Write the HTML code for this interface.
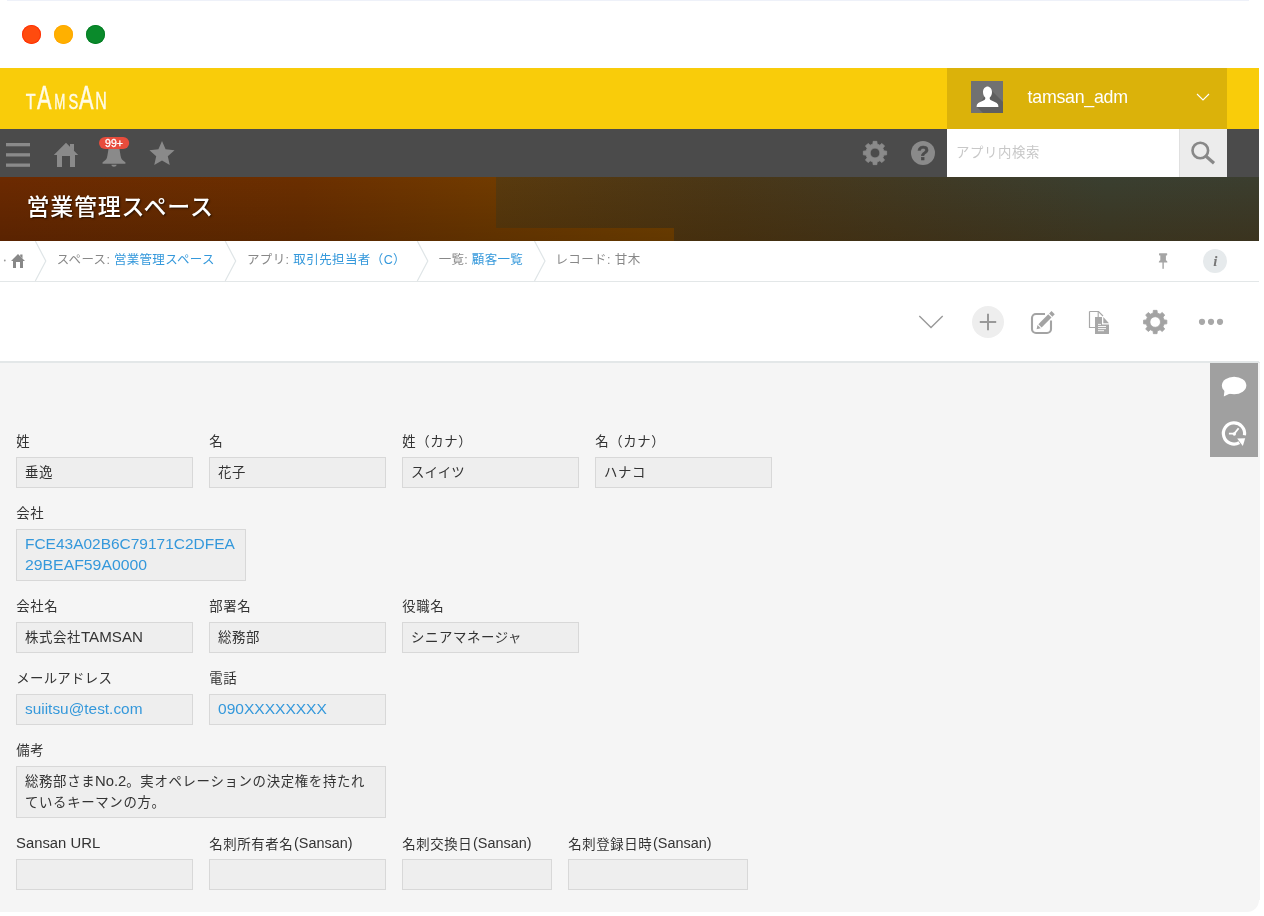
<!DOCTYPE html>
<html lang="ja">
<head>
<meta charset="utf-8">
<title>営業管理スペース</title>
<style>
*{box-sizing:border-box;margin:0;padding:0}
html,body{width:1264px;height:916px;overflow:hidden;background:#fff}
body{font-family:"Liberation Sans","Noto Sans CJK JP",sans-serif;color:#333;font-size:14px;position:relative}
.abs{position:absolute}
#topline{left:7px;top:0;width:1242px;height:1px;background:#eef1f9}
.dot{position:absolute;top:25px;width:19px;height:19px;border-radius:50%}
#hdr{left:0;top:68px;width:1259px;height:61px;background:#f9cc0a}
#user{left:947px;top:68px;width:280px;height:61px;background:#dbb20a}
#uname{left:1027.6px;top:85.5px;color:#fff;font-size:17.8px;letter-spacing:-0.27px;line-height:22px;white-space:nowrap}
#nav{left:0;top:129px;width:1259px;height:48px;background:#4b4b4b}
#search{left:947px;top:129px;width:232px;height:48px;background:#fff}
#search span{position:absolute;left:9px;top:14px;font-size:13.4px;letter-spacing:.6px;line-height:20px;color:#c8c8c8;white-space:nowrap}
#sbtn{left:1179px;top:129px;width:48px;height:48px;background:#ececec;border-left:1px solid #e0e0e0}
#banner{left:0;top:177px;width:1259px;height:64px;background:#5d2600;overflow:hidden}
#title{left:26.4px;top:189.3px;color:#fff;font-size:23px;letter-spacing:0.75px;font-weight:500;line-height:36px;white-space:nowrap;text-shadow:1px 1px 2px rgba(0,0,0,.65)}
#crumb{left:0;top:241px;width:1259px;height:41px;background:#fff;border-bottom:1px solid #e3e7e8}
.bc{position:absolute;top:250px;font-size:12.5px;letter-spacing:.5px;line-height:20px;color:#888;white-space:nowrap}
.bc a,.fd.lnk{color:#3498db;text-decoration:none}
#tool{left:0;top:282px;width:1259px;height:80px;background:#fff;border-bottom:1px solid #e3e7e8}
#main{left:0;top:362px;width:1259.5px;height:538px;background:#f5f5f5;border-top:1px solid #e3e7e8}
#main2{left:0;top:899.5px;width:1258.5px;height:12.5px;background:#f5f5f5;border-bottom-right-radius:12px}
#side{left:1210px;top:363px;width:48px;height:94px;background:#a0a0a0}
.lb{position:absolute;font-size:13.4px;letter-spacing:.6px;line-height:20px;color:#333;white-space:nowrap;padding-left:.3px;margin-top:.9px}
.sx{display:inline-block;transform-origin:0 50%;white-space:nowrap;font-size:14px;letter-spacing:0}
.fd>.sx:first-child{margin-left:-.4px}
.lb>.sx:first-child{margin-left:-.6px}
.lb>.sx{position:relative;top:-.7px}
.fd{position:absolute;height:31px;background:#eeeeee;border:1px solid #d8d8d8;font-size:13.4px;letter-spacing:.6px;line-height:21px;padding:4px 8px 4px 8px;color:#333;white-space:nowrap;overflow:hidden}
</style>
</head>
<body>
<div id="root" style="position:absolute;left:0;top:0;width:1264px;height:916px;will-change:transform;transform:translateZ(0)">
<div class="abs" id="topline"></div>
<div class="dot" style="left:22px;background:#ff4b0e;box-shadow:inset 0 0 0 1px #ff3207"></div>
<div class="dot" style="left:54px;background:#ffb000;box-shadow:inset 0 0 0 1px #ffa800"></div>
<div class="dot" style="left:86px;background:#0a8a2b;box-shadow:inset 0 0 0 1px #057f25"></div>

<div class="abs" id="hdr"></div>
<svg class="abs" style="left:22px;top:80px" width="92" height="34" viewBox="0 0 92 34">
<g fill="#fffbe6" stroke="#fffbe6" stroke-width="0.45" font-family="Liberation Sans, sans-serif" font-weight="400">
<text transform="translate(3.7,29.3) scale(0.72,1)" font-size="22.5">T</text>
<text transform="translate(14.9,29.3) scale(0.67,1)" font-size="32.5">A</text>
<text transform="translate(32.2,29.3) scale(0.62,1)" font-size="21.5">M</text>
<text transform="translate(46.6,29.3) scale(0.68,1)" font-size="21.5">S</text>
<text transform="translate(56.9,29.3) scale(0.67,1)" font-size="32.5">A</text>
<text transform="translate(73.3,29.3) scale(0.68,1)" font-size="23.5">N</text>
</g></svg>
<div class="abs" id="user"></div>
<svg class="abs" style="left:971px;top:81px" width="32" height="32" viewBox="0 0 32 32">
<rect width="32" height="32" fill="#717171"/>
<path d="M19 8L32 21V32H12L6 26Z" fill="#5f5f5f"/>
<path d="M16 5.5c3.1 0 5 2.4 5 5.6 0 2.3-.9 4.3-2.2 5.4-.3.8-.1 1.9.8 2.4 2.6 1.3 6.2 2.2 7.4 4.6.3.6.4 1.6.4 2.5H5.6c0-.9.1-1.900.4-2.500 1.200-2.400 4.800-3.300 7.400-4.600.9-.5 1.100-1.600.8-2.400-1.300-1.100-2.200-3.100-2.200-5.400 0-3.200 1.900-5.600 5-5.600z" fill="#fff"/>
</svg>
<svg class="abs" style="left:1196px;top:92px" width="14" height="10" viewBox="0 0 14 10"><path d="M1 2L7 8L13 2" fill="none" stroke="#fff" stroke-width="1.1"/></svg>
<div class="abs" id="uname">tamsan_adm</div>
<div class="abs" id="nav"></div>
<div class="abs" id="search"><span>アプリ内検索</span></div>
<div class="abs" id="sbtn"></div>
<svg class="abs" style="left:0;top:129px" width="946" height="48" viewBox="0 0 946 48">
<g fill="#8a8a8a">
<rect x="6" y="14" width="24" height="3.3"/><rect x="6" y="24.2" width="24" height="3.3"/><rect x="6" y="34.5" width="24" height="3.3"/>
<path d="M66 13.8L78.2 26H75V38H70V27H62V38H57V26H53.8Z M70 15H74V21.8L70 17.8Z"/>
<path d="M108.6 19h10.8c.5 3.6 1 7.2 1.7 9.8.6 2.2 2.6 3.2 4.2 4.4.5.4.3 1.6-.5 1.6h-21.6c-.8 0-1-1.2-.5-1.6 1.6-1.2 3.6-2.2 4.2-4.4.7-2.6 1.2-6.2 1.7-9.8z M111.3 35.8h5.4c-.2 1.3-1.3 2-2.7 2s-2.5-.7-2.7-2z"/>
<path d="M162.00 12.10 L165.59 20.36 L174.55 21.22 L167.80 27.19 L169.76 35.98 L162.00 31.40 L154.24 35.98 L156.20 27.19 L149.45 21.22 L158.41 20.36Z"/>
<path fill-rule="evenodd" stroke="#8a8a8a" stroke-width="0.8" stroke-linejoin="round" d="M872.92 15.04 L873.15 12.35 L876.85 12.35 L877.08 15.04 L879.87 16.19 L881.94 14.45 L884.55 17.06 L882.81 19.13 L883.96 21.92 L886.65 22.15 L886.65 25.85 L883.96 26.08 L882.81 28.87 L884.55 30.94 L881.94 33.55 L879.87 31.81 L877.08 32.96 L876.85 35.65 L873.15 35.65 L872.92 32.96 L870.13 31.81 L868.06 33.55 L865.45 30.94 L867.19 28.87 L866.04 26.08 L863.35 25.85 L863.35 22.15 L866.04 21.92 L867.19 19.13 L865.45 17.06 L868.06 14.45 L870.13 16.19Z M870.10 24.00 a4.90 4.90 0 1 0 9.80 0 a4.90 4.90 0 1 0 -9.80 0Z"/>
<circle cx="923" cy="24" r="12"/>
</g>
<rect x="99" y="7.9" width="30.2" height="12.2" rx="6.1" fill="#e74c3c"/>
<text x="114" y="18" text-anchor="middle" font-family="Liberation Sans, sans-serif" font-size="10.5" fill="#fff" stroke="#fff" stroke-width="0.3">99+</text>
<text x="923" y="31.3" text-anchor="middle" font-family="Liberation Sans, sans-serif" font-weight="700" font-size="20" fill="#4b4b4b" stroke="#4b4b4b" stroke-width="0.5">?</text>
</svg>
<svg class="abs" style="left:1179px;top:129px" width="48" height="48" viewBox="0 0 48 48"><circle cx="21.3" cy="21.5" r="7.8" fill="none" stroke="#888" stroke-width="2.6"/><path d="M27 27.2L35 34.2" stroke="#888" stroke-width="3.2" stroke-linecap="butt"/></svg>
<div class="abs" id="banner">
<svg width="1259" height="64" viewBox="0 0 1259 64" style="position:absolute;left:0;top:0;display:block">
<defs>
<linearGradient id="gL" x1="0" y1="0" x2="1" y2="0"><stop offset="0" stop-color="#6c2a01"/><stop offset="0.45" stop-color="#6b2f00"/><stop offset="0.735" stop-color="#713b00"/><stop offset="1" stop-color="#764300"/></linearGradient>
<linearGradient id="gV" x1="0" y1="0" x2="0" y2="1"><stop offset="0" stop-color="#000" stop-opacity="0"/><stop offset="1" stop-color="#000" stop-opacity="0.17"/></linearGradient>
<linearGradient id="gR" x1="0" y1="0" x2="1" y2="0"><stop offset="0" stop-color="#593a0e"/><stop offset="0.3" stop-color="#4a3717"/><stop offset="0.6" stop-color="#3f3b27"/><stop offset="0.8" stop-color="#3a3f30"/><stop offset="1" stop-color="#3b3e2f"/></linearGradient>
<linearGradient id="gRV" x1="0" y1="0" x2="0" y2="1"><stop offset="0" stop-color="#3a2000" stop-opacity="0"/><stop offset="1" stop-color="#3a2000" stop-opacity="0.35"/></linearGradient>
</defs>
<rect x="0" y="0" width="674" height="64" fill="url(#gL)"/>
<rect x="0" y="0" width="674" height="64" fill="url(#gV)"/>
<path d="M496 0H1259V64H674V51H496Z" fill="url(#gR)"/>
<path d="M496 0H1259V64H674V51H496Z" fill="url(#gRV)"/>
</svg></div>
<div class="abs" id="title">営業管理スペース</div>
<div class="abs" id="crumb"></div>
<svg class="abs" style="left:0;top:241px" width="1259" height="41" viewBox="0 0 1259 41"><path d="M35.3 0L45.8 20L35.3 40" fill="none" stroke="#dfe5e7" stroke-width="1.2"/><path d="M225.2 0L235.7 20L225.2 40" fill="none" stroke="#dfe5e7" stroke-width="1.2"/><path d="M417.3 0L427.8 20L417.3 40" fill="none" stroke="#dfe5e7" stroke-width="1.2"/><path d="M534.5 0L545.0 20L534.5 40" fill="none" stroke="#dfe5e7" stroke-width="1.2"/>
<circle cx="4.8" cy="19.5" r="0.9" fill="#999"/>
<path fill="#888" d="M18 13L25 20H23V27H20V21H16V27H13V20H11Z M20.2 13.5H22.5V17.2L20.2 15Z"/>
<g fill="#a5a5a5"><rect x="1159" y="12.2" width="8.2" height="2.2" rx="0.6"/><rect x="1160.3" y="13" width="5.6" height="7"/><path d="M1158.8 21.5c0-1.400 1-2.200 2-2.200h4.600c1 0 2 .8 2 2.200z"/><rect x="1162.4" y="21" width="1.4" height="6.8"/></g>
<circle cx="1215" cy="20" r="12" fill="#e6eaec"/>
<text x="1215.3" y="25" text-anchor="middle" font-family="Liberation Serif, serif" font-style="italic" font-weight="700" font-size="15" fill="#777">i</text>
</svg>
<div class="bc" style="left:56.7px;letter-spacing:0.3px">スペース: <a>営業管理スペース</a></div>
<div class="bc" style="left:246.9px;letter-spacing:0.4px">アプリ: <a>取引先担当者（C）</a></div>
<div class="bc" style="left:438.7px;letter-spacing:0.3px">一覧: <a>顧客一覧</a></div>
<div class="bc" style="left:555.4px;letter-spacing:0.4px">レコード: 甘木</div>
<div class="abs" id="tool"></div>
<svg class="abs" style="left:900px;top:282px" width="359" height="80" viewBox="900 0 359 80">
<path d="M919.3 34L931 45.5L942.7 34" fill="none" stroke="#999" stroke-width="1.4"/>
<circle cx="988" cy="40" r="16" fill="#eeeeee"/>
<path d="M979.8 40H996.2M988 31.8V48.2" stroke="#999" stroke-width="2" fill="none"/>
<path d="M1045 32H1036a4 4 0 0 0-4 4v11a4 4 0 0 0 4 4h11a4 4 0 0 0 4-4V38.5" fill="none" stroke="#a3a3a3" stroke-width="2.1"/>
<g fill="#a3a3a3" transform="translate(1036.6,47.2) rotate(-45)"><path d="M0 0L3.6 -2.3V2.3Z"/><rect x="4.8" y="-2.3" width="14" height="4.6"/><rect x="20" y="-2.3" width="3.4" height="4.6"/></g>
<path d="M1089.5 29.5H1098.5L1103 34M1089.5 29.5V45.5H1095" fill="none" stroke="#a8a8a8" stroke-width="1.2"/>
<path fill="#a8a8a8" d="M1095 35H1102V42.5H1109V52H1095Z M1103.3 35L1109 41.2H1103.3Z"/>
<path d="M1098.2 29.5V35" stroke="#a8a8a8" stroke-width="1.1" fill="none"/>
<g stroke="#fff" stroke-width="0.9"><path d="M1098 42.4H1101M1098 44.5H1106M1098 46.6H1106M1098 48.7H1104"/></g>
<path fill="#a3a3a3" fill-rule="evenodd" stroke="#a3a3a3" stroke-width="0.8" stroke-linejoin="round" d="M1153.12 31.04 L1153.35 28.35 L1157.05 28.35 L1157.28 31.04 L1160.07 32.19 L1162.14 30.45 L1164.75 33.06 L1163.01 35.13 L1164.16 37.92 L1166.85 38.15 L1166.85 41.85 L1164.16 42.08 L1163.01 44.87 L1164.75 46.94 L1162.14 49.55 L1160.07 47.81 L1157.28 48.96 L1157.05 51.65 L1153.35 51.65 L1153.12 48.96 L1150.33 47.81 L1148.26 49.55 L1145.65 46.94 L1147.39 44.87 L1146.24 42.08 L1143.55 41.85 L1143.55 38.15 L1146.24 37.92 L1147.39 35.13 L1145.65 33.06 L1148.26 30.45 L1150.33 32.19Z M1149.90 40.00 a5.30 5.30 0 1 0 10.60 0 a5.30 5.30 0 1 0 -10.60 0Z"/>
<circle cx="1202" cy="39.8" r="3.1" fill="#a8a8a8"/><circle cx="1211" cy="39.8" r="3.1" fill="#a8a8a8"/><circle cx="1220" cy="39.8" r="3.1" fill="#a8a8a8"/>
</svg>
<div class="abs" id="main"></div>
<div class="abs" id="main2"></div>
<div class="abs" id="side"></div>

<svg class="abs" style="left:1210px;top:363px" width="48" height="94" viewBox="0 0 48 94">
<ellipse cx="24.1" cy="22.5" rx="12.2" ry="8.8" fill="#fff"/>
<path d="M14.5 27L13.8 33.5L21 30Z" fill="#fff"/>
<path d="M34.44 72.34A10.6 10.6 0 1 0 29.3 79.68" fill="none" stroke="#fff" stroke-width="3.2"/>
<path d="M27.2 75.6L35.2 75.3L32.8 83.1Z" fill="#fff"/>
<path d="M18.9 70.6H24.3L28.6 65.2" fill="none" stroke="#fff" stroke-width="1.8" stroke-linejoin="round"/>
<circle cx="24.3" cy="71" r="1.7" fill="#fff"/>
</svg>
<!-- FORM -->
<div class="lb" style="left:16px;top:431px">姓</div>
<div class="lb" style="left:209px;top:431px">名</div>
<div class="lb" style="left:402px;top:431px">姓（カナ）</div>
<div class="lb" style="left:595px;top:431px">名（カナ）</div>
<div class="fd" style="left:16px;top:457px;width:177px">垂逸</div>
<div class="fd" style="left:209px;top:457px;width:177px">花子</div>
<div class="fd" style="left:402px;top:457px;width:177px;letter-spacing:0">スイイツ</div>
<div class="fd" style="left:595px;top:457px;width:177px">ハナコ</div>

<div class="lb" style="left:16px;top:503px">会社</div>
<div class="fd lnk" style="left:16px;top:529px;width:230px;height:52px;white-space:nowrap"><span class="sx" style="transform:scaleX(1.105)">FCE43A02B6C79171C2DFEA</span><br><span class="sx" style="transform:scaleX(1.128);margin-left:-.4px">29BEAF59A0000</span></div>

<div class="lb" style="left:16px;top:596px">会社名</div>
<div class="lb" style="left:209px;top:596px">部署名</div>
<div class="lb" style="left:402px;top:596px">役職名</div>
<div class="fd" style="left:16px;top:622px;width:177px">株式会社<span class="sx" style="transform:scaleX(1.08)">TAMSAN</span></div>
<div class="fd" style="left:209px;top:622px;width:177px">総務部</div>
<div class="fd" style="left:402px;top:622px;width:177px">シニアマネージャ</div>

<div class="lb" style="left:16px;top:668px;letter-spacing:0.3px">メールアドレス</div>
<div class="lb" style="left:209px;top:668px">電話</div>
<div class="fd lnk" style="left:16px;top:694px;width:177px"><span class="sx" style="transform:scaleX(1.1)">suiitsu@test.com</span></div>
<div class="fd lnk" style="left:209px;top:694px;width:177px"><span class="sx" style="transform:scaleX(1.11)">090XXXXXXXX</span></div>

<div class="lb" style="left:16px;top:740px">備考</div>
<div class="fd" style="left:16px;top:766px;width:370px;height:52px;white-space:normal;letter-spacing:.67px">総務部さま<span class="sx" style="transform:scaleX(1.06);margin-right:1.8px">No.2</span>。実オペレーションの決定権を持たれているキーマンの方。</div>

<div class="lb" style="left:16px;top:833px"><span class="sx" style="transform:scaleX(1.06)">Sansan URL</span></div>
<div class="lb" style="left:209px;top:833px">名刺所有者名<span class="sx" style="transform:scaleX(1.03);margin-left:.8px">(Sansan)</span></div>
<div class="lb" style="left:402px;top:833px">名刺交換日<span class="sx" style="transform:scaleX(1.03);margin-left:.8px">(Sansan)</span></div>
<div class="lb" style="left:568px;top:833px">名刺登録日時<span class="sx" style="transform:scaleX(1.03);margin-left:.8px">(Sansan)</span></div>
<div class="fd" style="left:16px;top:859px;width:177px"></div>
<div class="fd" style="left:209px;top:859px;width:177px"></div>
<div class="fd" style="left:402px;top:859px;width:150px"></div>
<div class="fd" style="left:568px;top:859px;width:180px"></div>
</div>
</body>
</html>
